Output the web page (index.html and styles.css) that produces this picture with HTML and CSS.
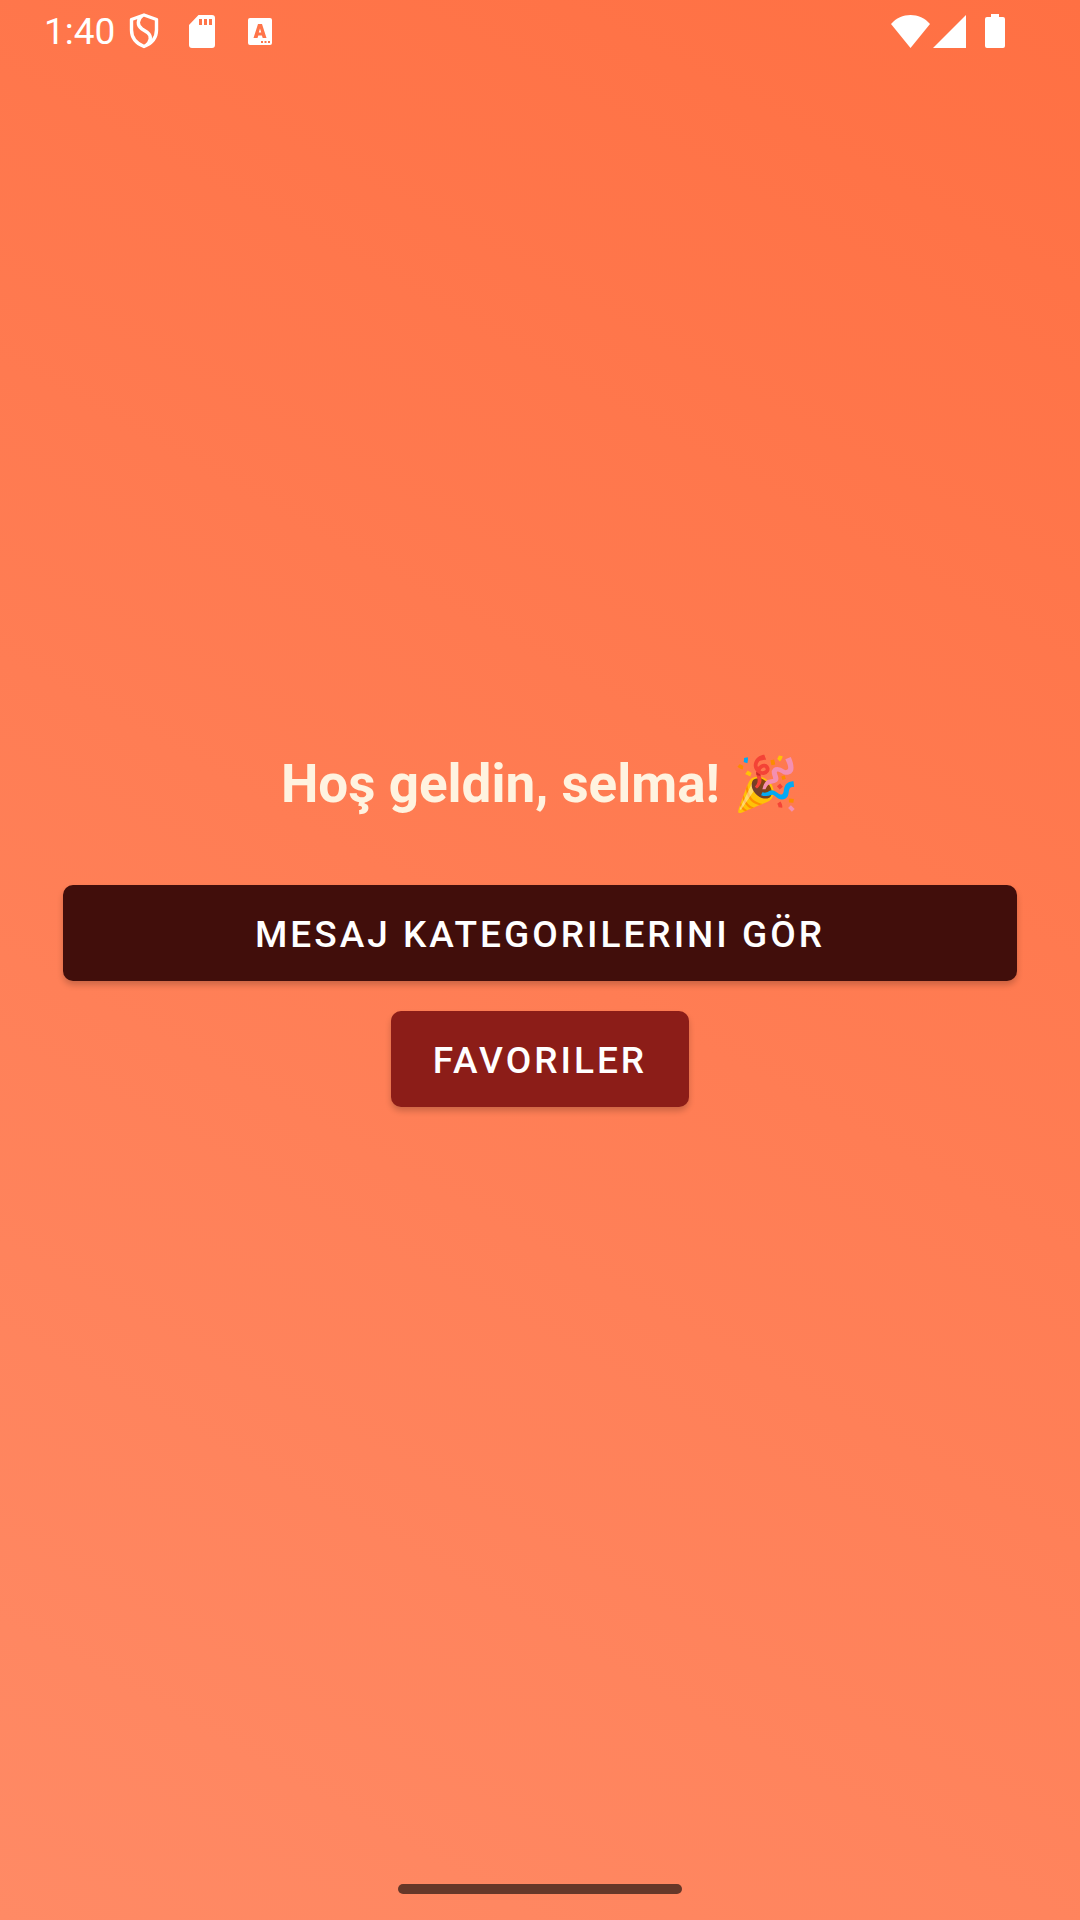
FILE: index.html
```html
<!DOCTYPE html>
<html lang="tr">
<head>
<meta charset="utf-8">
<meta name="viewport" content="width=device-width, initial-scale=1">
<title>Hoş geldin</title>
<link rel="stylesheet" href="styles.css">
</head>
<body>
<div class="screen">
  <header class="status">
    <div class="status-group">
      <time class="clock">1:40</time>
      <svg class="icon-shield" viewBox="0 0 30 36" aria-hidden="true"><path d="M15 2 L27.500 6.500 V17 C27.500 25 22.500 30.500 15 33.500 C7.500 30.500 2.500 25 2.500 17 V6.500 Z M13.500 2.500 C8 6.500 8 12.500 13 16 L18.500 19.500 C23 23 22 29 16.500 33" fill="none" stroke="currentColor" stroke-width="3.400" stroke-linejoin="round"/></svg>
      <svg class="icon-card" viewBox="0 0 26 33" aria-hidden="true"><path fill="currentColor" fill-rule="evenodd" d="M9.500 0H23a3 3 0 0 1 3 3V30a3 3 0 0 1-3 3H3a3 3 0 0 1-3-3V10Z M10 4v6h3v-6Z M15 4v6h3v-6Z M20 4v6h3v-6Z"/></svg>
      <svg class="icon-letter" viewBox="0 0 24 27" aria-hidden="true"><path fill="currentColor" fill-rule="evenodd" d="M2 0H22a2 2 0 0 1 2 2V25a2 2 0 0 1-2 2H2a2 2 0 0 1-2-2V2a2 2 0 0 1 2-2Z M10 6 5.500 20H9.500l.8-2.500h3.600L14.700 20H18.500L14 6Z M12 10.500 13.200 14.500h-2.400Z M13 23v2h2v-2Z M16.500 23v2h2v-2Z M20 23v2h2v-2Z"/></svg>
    </div>
    <div class="status-group">
      <svg class="icon-wifi" viewBox="0 0 39 33" aria-hidden="true"><path fill="currentColor" d="M0 9C10-3 29-3 39 9L19.500 33Z"/></svg>
      <svg class="icon-signal" viewBox="0 0 33 33" aria-hidden="true"><path fill="currentColor" d="M33 0V33H0Z"/></svg>
      <svg class="icon-battery" viewBox="0 0 20 34" aria-hidden="true"><path fill="currentColor" d="M6 0h8v3h4a2 2 0 0 1 2 2V32a2 2 0 0 1-2 2H2a2 2 0 0 1-2-2V5a2 2 0 0 1 2-2h4Z"/></svg>
    </div>
  </header>
  <main class="content">
    <h1 class="welcome">Hoş geldin, selma! 🎉</h1>
    <button class="btn btn-wide" type="button">MESAJ KATEGORILERINI GÖR</button>
    <button class="btn btn-favorites" type="button">FAVORILER</button>
  </main>
  <footer class="nav"><div class="handle"></div></footer>
</div>
</body>
</html>
```
FILE: styles.css
```css
* { box-sizing: border-box; }
body {
  margin: 0;
  font-family: Roboto, "Noto Sans", "Noto Color Emoji", sans-serif;
}
.screen {
  min-height: 100vh;
  display: flex;
  flex-direction: column;
  background: linear-gradient(209deg, #ff7043, #ff8a65);
}
.status {
  height: 62px;
  padding: 0 75px 0 44px;
  display: flex;
  align-items: center;
  justify-content: space-between;
  color: #fff;
}
.status-group { display: flex; align-items: center; }
.clock { font-size: 37px; line-height: 60px; padding-top: 2px; margin-right: 14px; }
.icon-shield { width: 30px; height: 36px; margin-right: 30px; }
.icon-card { width: 26px; height: 33px; margin-right: 33px; }
.icon-letter { width: 24px; height: 27px; }
.icon-wifi { width: 39px; height: 33px; margin-right: 3px; }
.icon-signal { width: 33px; height: 33px; margin-right: 19px; }
.icon-battery { width: 20px; height: 34px; }
.content {
  flex: 1;
  padding: 0 63px 66px;
  display: flex;
  flex-direction: column;
  align-items: center;
  justify-content: center;
}
.welcome {
  margin: 0 0 65px;
  font-size: 53px;
  line-height: 72px;
  font-weight: 700;
  color: #fff3e0;
}
.btn {
  height: 96px;
  padding: 4px 42px 0;
  border: 0;
  border-radius: 10px;
  font: 500 37px/48px Roboto, "Noto Sans", sans-serif;
  letter-spacing: 3px;
  color: #fff;
  box-shadow: 0 4px 6px rgba(0, 0, 0, 0.2);
}
.btn-wide { width: 100%; background: #410e0b; margin-bottom: 30px; }
.btn-favorites { background: #8c1d18; }
.nav {
  height: 62px;
  display: flex;
  align-items: center;
  justify-content: center;
}
.handle {
  width: 284px;
  height: 10px;
  border-radius: 5px;
  background: #663728;
}
```
